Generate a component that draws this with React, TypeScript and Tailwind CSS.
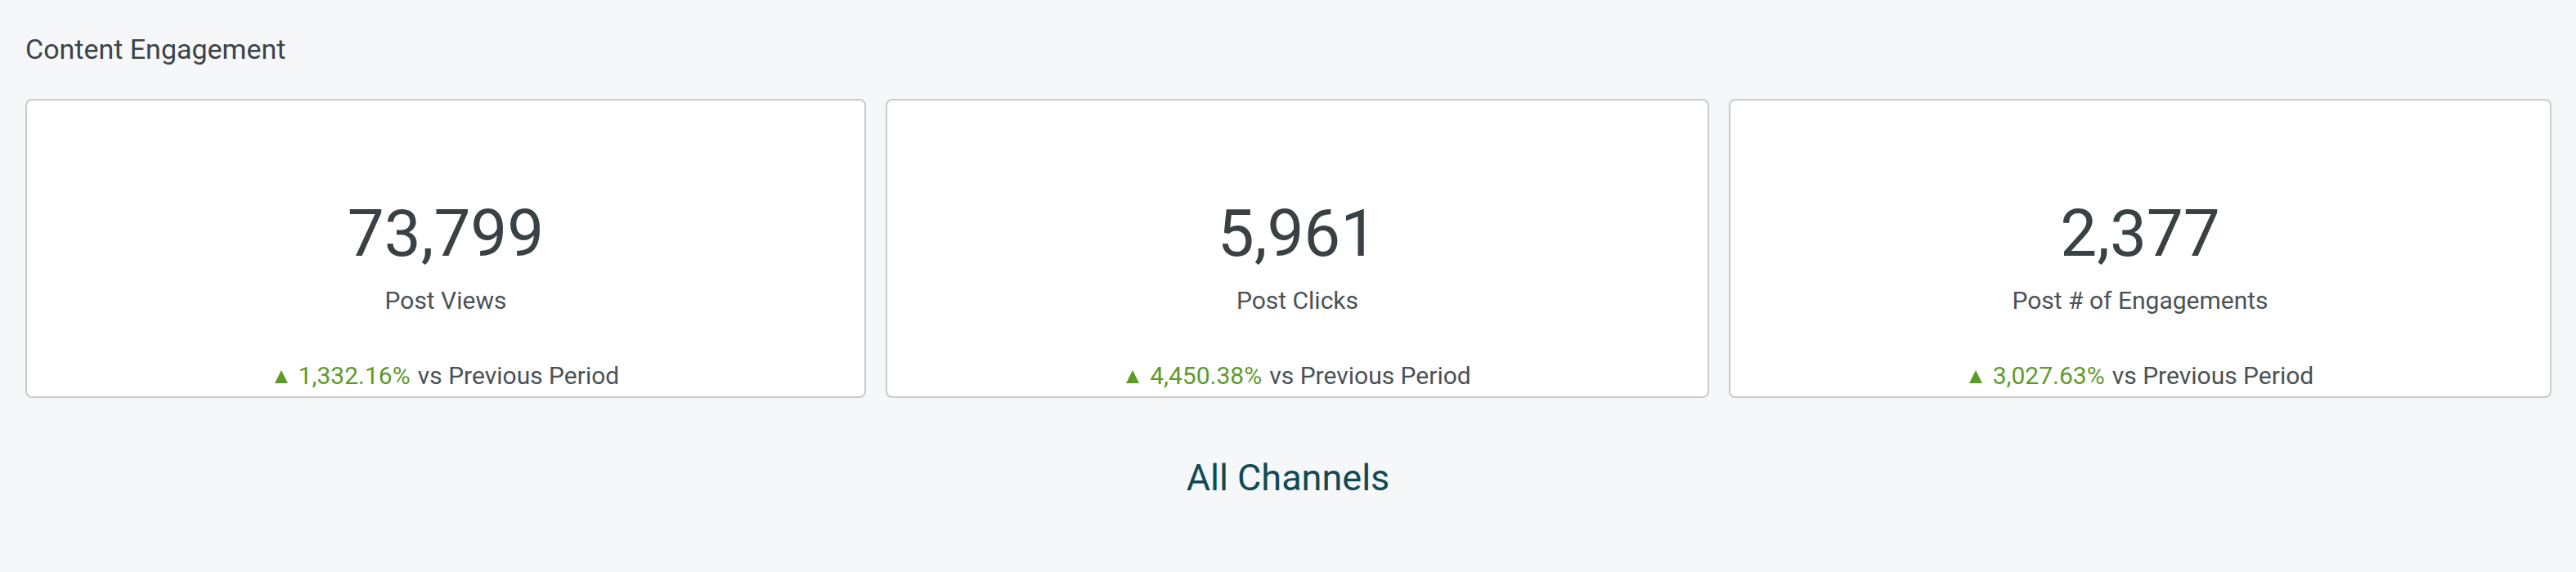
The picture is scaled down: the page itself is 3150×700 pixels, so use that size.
const stats = [
  { value: '73,799', label: 'Post Views', change: '1,332.16%', width: 'w-[1028px]' },
  { value: '5,961', label: 'Post Clicks', change: '4,450.38%', width: 'w-[1007px]' },
  { value: '2,377', label: 'Post # of Engagements', change: '3,027.63%', width: 'w-[1006px]' },
];

function StatCard({ value, label, change, width }: (typeof stats)[number]) {
  return (
    <div
      className={`${width} h-[366px] flex flex-col items-center rounded-[8px] border-2 border-[#c9cacb] bg-white`}
    >
      {/* 값 */}
      <div className="mt-[123px] text-[80px] leading-[80px] text-[#394145]">{value}</div>
      <div className="mt-[26px] text-[30px] leading-[32px] text-[#4a5256]">{label}</div>

      {/* 변화율 */}
      <div className="mt-[60px] flex items-center text-[30px] leading-[32px] text-[#4a5256]">
        <svg width="16" height="16" viewBox="0 0 16 16" className="mr-[13px] mt-[2px] ml-[3px]">
          <polygon points="8,0 16,16 0,16" fill="#5e9a2b" />
        </svg>
        <span className="text-[#5e9a2b]">{change}</span>
        <span className="ml-[9px]">vs Previous Period</span>
      </div>
    </div>
  );
}

export default function App() {
  return (
    <main
      className="w-full h-[700px] bg-[#f6f7f9] pl-[31px] pt-[41px]"
      style={{ fontFamily: 'Roboto, "Liberation Sans", sans-serif' }}
    >
      <h2 className="text-[34px] leading-[38px] text-[#3b4347]">Content Engagement</h2>

      <section className="mt-[42px] flex gap-6">
        {stats.map((s) => (
          <StatCard key={s.label} {...s} />
        ))}
      </section>

      <div className="mt-[72px] pr-[31px] flex justify-center">
        <span className="text-[45px] leading-[52px] text-[#0f4a55]">All Channels</span>
      </div>
    </main>
  );
}
